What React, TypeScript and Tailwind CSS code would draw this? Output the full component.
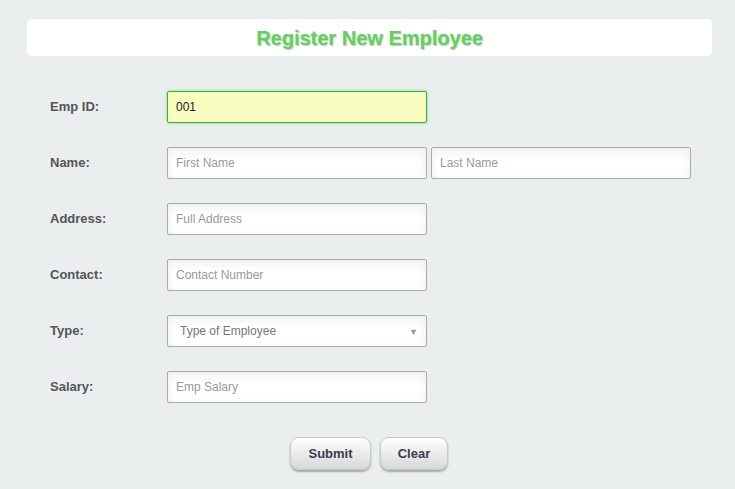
import { useState } from 'react';

const field =
  'h-[32px] rounded-[2px] border border-[#aaaaaa] bg-white px-[8px] text-[12px] text-[#333] placeholder:text-[#999] shadow-[inset_0_3px_10px_rgba(0,0,0,0.08)] outline-none';

const btn =
  'h-[33px] rounded-[9px] border border-[#c9c9c9] bg-[linear-gradient(to_bottom,#ffffff,#d8d8d8)] text-[13px] font-bold text-[#3b3b4f] shadow-[0_2px_2px_rgba(0,0,0,0.3)]';

function Row({ label, children }: { label: string; children: React.ReactNode }) {
  return (
    <div className="flex items-center">
      <label className="w-[117px] text-[13px] font-bold text-[#555]">{label}</label>
      <div className="flex gap-[4px]">{children}</div>
    </div>
  );
}

export default function App() {
  const [empId, setEmpId] = useState('001');

  return (
    <div
      className="min-h-[489px] w-full bg-[#ebeeef] pt-[19px]"
      style={{ fontFamily: '"Liberation Sans", Arial, sans-serif' }}
    >
      <div className="mr-[23px] ml-[27px] flex h-[37px] items-center justify-center rounded-[5px] bg-white">
        <h1 className="text-[20px] font-bold text-[#5bd55b] [text-shadow:1px_1px_1px_rgba(0,0,0,0.25)]">
          Register New Employee
        </h1>
      </div>

      <form className="mt-[35px] flex flex-col gap-[24px] pl-[50px]" onSubmit={(e) => e.preventDefault()}>
        <Row label="Emp ID:">
          <input
            value={empId}
            onChange={(e) => setEmpId(e.target.value)}
            className="h-[32px] w-[260px] rounded-[2px] border border-[#2fb52f] bg-[#fafdc0] px-[8px] text-[12px] text-[#222] shadow-[0_0_3px_rgba(60,200,60,0.6)] outline-none"
          />
        </Row>
        <Row label="Name:">
          <input placeholder="First Name" className={`${field} w-[260px]`} />
          <input placeholder="Last Name" className={`${field} w-[260px]`} />
        </Row>
        <Row label="Address:">
          <input placeholder="Full Address" className={`${field} w-[260px]`} />
        </Row>
        <Row label="Contact:">
          <input placeholder="Contact Number" className={`${field} w-[260px]`} />
        </Row>
        <Row label="Type:">
          <div className={`${field} relative flex w-[260px] items-center pl-[12px] text-[#777]`}>
            Type of Employee
            <span className="absolute right-[8px] top-[10px] text-[9px] text-[#999]">▼</span>
          </div>
        </Row>
        <Row label="Salary:">
          <input placeholder="Emp Salary" className={`${field} w-[260px]`} />
        </Row>

        <div className="mt-[10px] flex justify-center gap-[9px] pr-[47px]">
          <button type="submit" className={`${btn} w-[81px]`}>Submit</button>
          <button type="button" className={`${btn} w-[68px]`}>Clear</button>
        </div>
      </form>
    </div>
  );
}
